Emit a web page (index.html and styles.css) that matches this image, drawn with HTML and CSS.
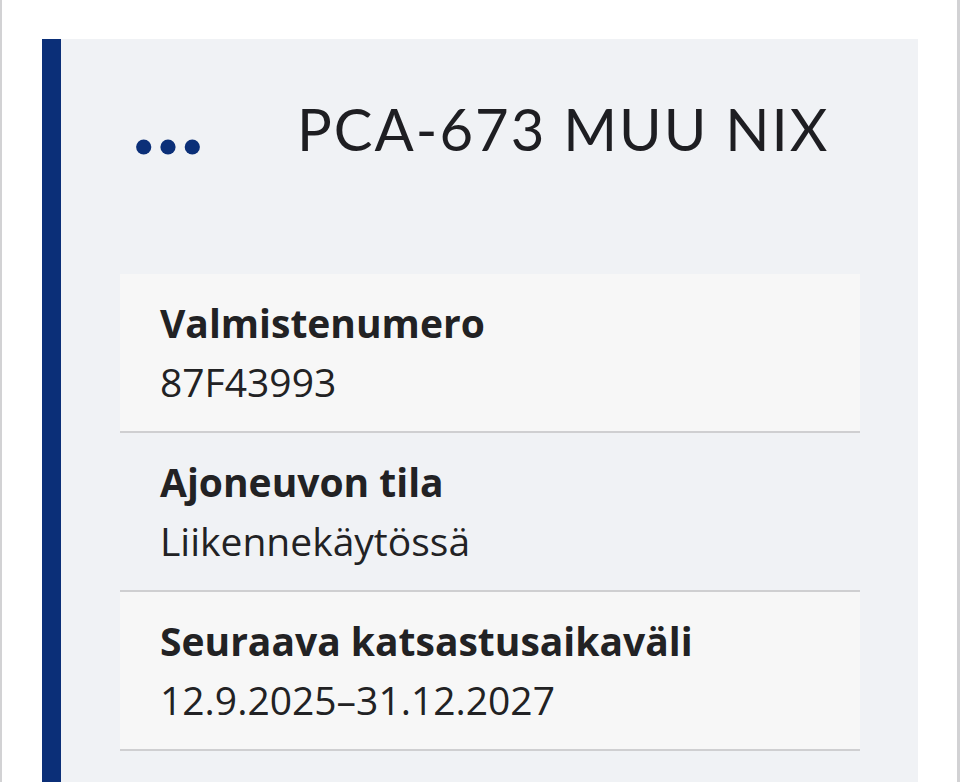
FILE: index.html
```html
<!DOCTYPE html>
<html lang="fi">
<head>
<meta charset="utf-8">
<title>PCA-673 MUU NIX</title>
<link rel="stylesheet" href="styles.css">
</head>
<body>
<div class="frame">
  <section class="card">
    <header class="card-head">
      <button class="more" aria-label="Lisää toimintoja">
        <svg width="64" height="16" viewBox="0 0 64 16" aria-hidden="true">
          <circle cx="7.7" cy="8" r="7.6" fill="#0b2f78"/>
          <circle cx="32" cy="8" r="7.6" fill="#0b2f78"/>
          <circle cx="56.3" cy="8" r="7.6" fill="#0b2f78"/>
        </svg>
      </button>
      <h1 class="title">PCA-673 MUU NIX</h1>
    </header>
    <dl class="facts">
      <div class="fact fact-light">
        <dt>Valmistenumero</dt>
        <dd>87F43993</dd>
      </div>
      <div class="fact">
        <dt>Ajoneuvon tila</dt>
        <dd>Liikennekäytössä</dd>
      </div>
      <div class="fact fact-light">
        <dt>Seuraava katsastusaikaväli</dt>
        <dd>12.9.2025–31.12.2027</dd>
      </div>
    </dl>
  </section>
</div>
</body>
</html>
```

FILE: styles.css
```css
* { box-sizing: border-box; }

html, body {
  margin: 0;
  padding: 0;
  background: #ffffff;
  height: 100%;
  overflow: hidden;
}

body {
  font-family: "Open Sans", "Noto Sans", sans-serif;
  color: #222224;
}

.frame {
  min-height: 100%;
  border-left: 2px solid #d2d2d4;
  border-right: 3px solid #d2d2d4;
  padding: 39px 39px 0 40px;
}

.card {
  background: #f0f2f5;
  border-left: 19px solid #0b2f78;
  padding: 0 58px 40px 59px;
  min-height: 800px;
}

.card-head {
  display: flex;
  align-items: flex-start;
  padding: 55px 0 0 16px;
  height: 235px;
}

.more {
  border: 0;
  background: none;
  padding: 0;
  margin: 45px 97px 0 0;
  display: flex;
  cursor: pointer;
}

.title {
  margin: 0;
  font-family: "Lato", "Liberation Sans", sans-serif;
  font-weight: 400;
  font-size: 58px;
  line-height: 70px;
  color: #1e1e22;
  letter-spacing: 2px;
}

.facts {
  margin: 0;
}

.fact {
  padding: 19px 40px 20px;
  border-bottom: 2px solid #cfcfd1;
}

.fact-light {
  background: #f7f7f7;
}

.fact dt {
  font-weight: 700;
  font-size: 39px;
  line-height: 59px;
}

.fact dd {
  margin: 0;
  font-size: 39px;
  line-height: 59px;
}
```
